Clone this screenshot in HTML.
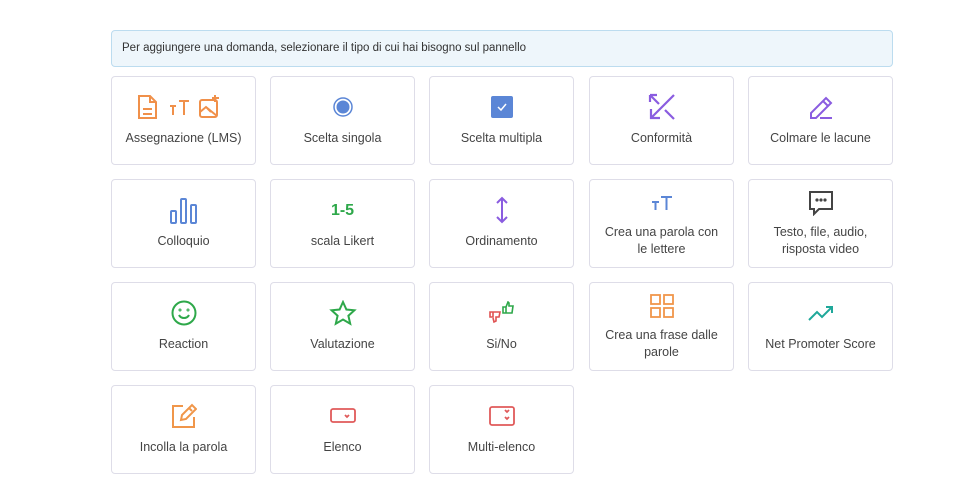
<!DOCTYPE html>
<html><head><meta charset="utf-8"><style>
body{margin:0;width:973px;height:491px;background:#fff;font-family:"Liberation Sans",sans-serif;color:#444;overflow:hidden}
.info{position:absolute;left:111px;top:30px;background:#eef6fb;border:1px solid #bcdcef;border-radius:4px;font-size:11.5px;line-height:35px;padding-left:10px;box-sizing:border-box;width:782px;height:37px;color:#333}
.card{position:absolute;width:145px;height:89px;border:1px solid #dedde8;border-radius:4px;box-sizing:border-box;display:flex;flex-direction:column;align-items:center;justify-content:center;text-align:center;font-size:12.5px;line-height:17px}
.ic{height:26px;display:flex;align-items:center;justify-content:center;margin-bottom:10px}
.two .ic{margin-bottom:8px}
</style></head><body>
<div class="info">Per aggiungere una domanda, selezionare il tipo di cui hai bisogno sul pannello</div>

<div class="card" style="left:111px;top:76px"><div class="ic"><svg width="96" height="26" viewBox="0 0 96 26" fill="none" stroke="#f0904a" stroke-width="2"><path d="M3 2h11l6 6v16H3z M14 2v6h6 M7 15h9 M7 20h9"/><path d="M34 12h6 M37 12v9 M43 7h10 M48 7v14"/><rect x="64" y="6" width="17" height="17" rx="2"/><path d="M64 18l6-5 11 9 M71 14l4 4 M79 1v7 M76 4h7"/></svg></div>Assegnazione (LMS)</div>
<div class="card" style="left:270px;top:76px"><div class="ic"><svg width="24" height="24" viewBox="0 0 24 24"><circle cx="12" cy="12" r="9" fill="none" stroke="#5b86d6" stroke-width="1.5"/><circle cx="12" cy="12" r="6.5" fill="#5b86d6"/></svg></div>Scelta singola</div>
<div class="card" style="left:429px;top:76px"><div class="ic"><svg width="24" height="24" viewBox="0 0 24 24"><rect x="1" y="1" width="22" height="22" rx="2" fill="#5b86d6"/><path d="M8 12l3 3 5-6" stroke="#fff" stroke-width="1.5" fill="none"/></svg></div>Scelta multipla</div>
<div class="card" style="left:589px;top:76px"><div class="ic"><svg width="28" height="28" viewBox="0 0 28 28" fill="none" stroke="#8a5ce0" stroke-width="2.2"><path d="M26 2L3 25 M3 16v9h9 M2 2l9 9 M2 2v7 M2 2h7 M17 17l9 9"/></svg></div>Conformità</div>
<div class="card" style="left:748px;top:76px"><div class="ic"><svg width="28" height="28" viewBox="0 0 28 28" fill="none" stroke="#8a5ce0" stroke-width="2"><path d="M4 25v-5L19 5l5 5L9 25z M16 8l5 5 M13 25h12"/></svg></div>Colmare le lacune</div>

<div class="card" style="left:111px;top:179px"><div class="ic"><svg width="30" height="28" viewBox="0 0 30 28" fill="none" stroke="#5b86d6" stroke-width="2"><rect x="2" y="15" width="5" height="12" rx="1"/><rect x="12" y="3" width="5" height="24" rx="1"/><rect x="22" y="9" width="5" height="18" rx="1"/></svg></div>Colloquio</div>
<div class="card" style="left:270px;top:179px"><div class="ic" style="color:#2ea84a;font-weight:bold;font-size:16px">1-5</div>scala Likert</div>
<div class="card" style="left:429px;top:179px"><div class="ic"><svg width="14" height="28" viewBox="0 0 14 28" fill="none" stroke="#8a5ce0" stroke-width="2"><path d="M7 2v24 M2 7l5-5 5 5 M2 21l5 5 5-5"/></svg></div>Ordinamento</div>
<div class="card two" style="left:589px;top:179px"><div class="ic"><svg width="22" height="16" viewBox="0 0 22 16" fill="none" stroke="#5b86d6" stroke-width="2"><path d="M1 7h7 M4.5 7v8 M10 2h11 M15.5 2v13"/></svg></div>Crea una parola con<br>le lettere</div>
<div class="card two" style="left:748px;top:179px"><div class="ic"><svg width="26" height="26" viewBox="0 0 26 26" fill="none" stroke="#444" stroke-width="2"><path d="M2 2h22v17H11l-5 5v-5H2z"/><circle cx="9" cy="10" r=".6" fill="#444"/><circle cx="13" cy="10" r=".6" fill="#444"/><circle cx="17" cy="10" r=".6" fill="#444"/></svg></div>Testo, file, audio,<br>risposta video</div>

<div class="card" style="left:111px;top:282px"><div class="ic"><svg width="26" height="26" viewBox="0 0 26 26" fill="none" stroke="#2ea84a" stroke-width="2"><circle cx="13" cy="13" r="11.5"/><path d="M8 15c2 4 8 4 10 0"/><circle cx="9" cy="10" r=".5"/><circle cx="17" cy="10" r=".5"/></svg></div>Reaction</div>
<div class="card" style="left:270px;top:282px"><div class="ic"><svg width="28" height="26" viewBox="0 0 28 26" fill="none" stroke="#2ea84a" stroke-width="2"><path d="M14 2l3.4 7.5 8 .8-6 5.4 1.8 8L14 19.5 6.8 23.7l1.8-8-6-5.4 8-.8z"/></svg></div>Valutazione</div>
<div class="card" style="left:429px;top:282px"><div class="ic"><svg width="28" height="24" viewBox="0 0 28 24" fill="none" stroke-width="1.6"><path d="M2 11h3v5H2z M5 11h7l-1 5H8v4l-2 1-1-4" stroke="#e05252"/><path d="M15 6h3v6h-3z M18 6l2-5 1 1v3h4l-1 7h-6" stroke="#2ea84a"/></svg></div>Si/No</div>
<div class="card two" style="left:589px;top:282px"><div class="ic"><svg width="26" height="26" viewBox="0 0 26 26" fill="none" stroke="#f0964a" stroke-width="1.8"><rect x="2" y="2" width="9" height="9"/><rect x="15" y="2" width="9" height="9"/><rect x="2" y="15" width="9" height="9"/><rect x="15" y="15" width="9" height="9"/></svg></div>Crea una frase dalle<br>parole</div>
<div class="card" style="left:748px;top:282px"><div class="ic"><svg width="28" height="20" viewBox="0 0 28 20" fill="none" stroke="#1fa89a" stroke-width="2"><path d="M2 17l8-8 5 5 10-10 M19 4h6v6"/></svg></div>Net Promoter Score</div>

<div class="card" style="left:111px;top:385px"><div class="ic"><svg width="26" height="26" viewBox="0 0 26 26" fill="none" stroke="#f0964a" stroke-width="2"><path d="M12 3H2v21h21V14 M10 17l1-5L21 2l4 4-10 10z M18 5l3 3"/></svg></div>Incolla la parola</div>
<div class="card" style="left:270px;top:385px"><div class="ic"><svg width="28" height="20" viewBox="0 0 28 20" fill="none" stroke="#e05a5a" stroke-width="1.8"><rect x="2" y="3" width="24" height="13" rx="2"/><path d="M16 9l2 2 2-2"/></svg></div>Elenco</div>
<div class="card" style="left:429px;top:385px"><div class="ic"><svg width="28" height="22" viewBox="0 0 28 22" fill="none" stroke="#e05a5a" stroke-width="1.8"><rect x="2" y="2" width="24" height="18" rx="2"/><path d="M17 5l2 2 2-2 M17 12l2 2 2-2"/></svg></div>Multi-elenco</div>
</body></html>
